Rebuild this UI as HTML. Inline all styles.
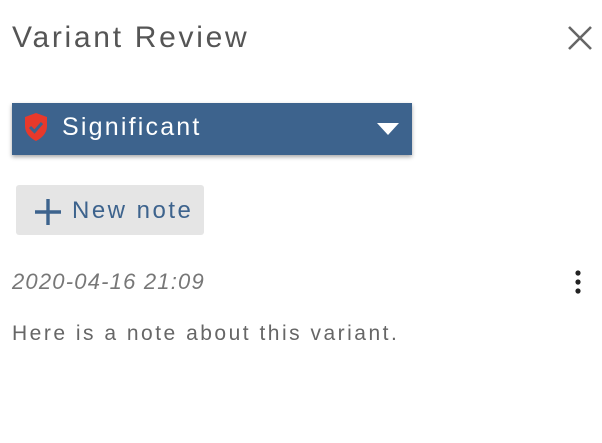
<!DOCTYPE html>
<html><head><style>
body{margin:0;width:602px;height:443px;background:#fff;font-family:"Liberation Sans",sans-serif;position:relative;overflow:hidden}
.a{position:absolute;white-space:nowrap}
</style></head><body>
<div class="a" style="left:12px;top:21px;font-size:30px;color:#555;letter-spacing:2.7px">Variant Review</div>
<svg class="a" style="left:566px;top:24px" width="28" height="28" viewBox="0 0 28 28"><path d="M3 3L25 25M25 3L3 25" stroke="#666" stroke-width="2.6"/></svg>
<div class="a" style="left:12px;top:103px;width:400px;height:52px;background:#3d638d;box-shadow:0 2px 4px rgba(0,0,0,.35)"></div>
<svg class="a" style="left:24px;top:112px" width="24" height="30" viewBox="0 0 24 30"><path d="M12 1L23 5V14C23 21 18 26 12 29C6 26 1 21 1 14V5Z" fill="#e8392b"/><path d="M6 15L10.5 19.5L18 11" stroke="#3d638d" stroke-width="3" fill="none"/></svg>
<div class="a" style="left:62px;top:113px;font-size:25px;color:#fff;letter-spacing:2.2px">Significant</div>
<svg class="a" style="left:377px;top:123px" width="22" height="12" viewBox="0 0 22 12"><path d="M0 0H22L11 12Z" fill="#fff"/></svg>
<div class="a" style="left:16px;top:185px;width:188px;height:50px;background:#e5e5e5;border-radius:3px"></div>
<svg class="a" style="left:34px;top:198px" width="28" height="28" viewBox="0 0 28 28"><path d="M14 1V27M1 14H27" stroke="#3d638d" stroke-width="3.4"/></svg>
<div class="a" style="left:72px;top:197px;font-size:24px;color:#3d638d;letter-spacing:2.5px">New note</div>
<div class="a" style="left:12px;top:269px;font-size:22px;color:#777;font-style:italic;letter-spacing:1.2px">2020-04-16 21:09</div>
<svg class="a" style="left:572px;top:270px" width="12" height="26" viewBox="0 0 12 26"><circle cx="6" cy="3" r="2.6" fill="#222"/><circle cx="6" cy="12" r="2.6" fill="#222"/><circle cx="6" cy="21" r="2.6" fill="#222"/></svg>
<div class="a" style="left:12px;top:322px;font-size:21px;color:#666;letter-spacing:2.5px">Here is a note about this variant.</div>
</body></html>
